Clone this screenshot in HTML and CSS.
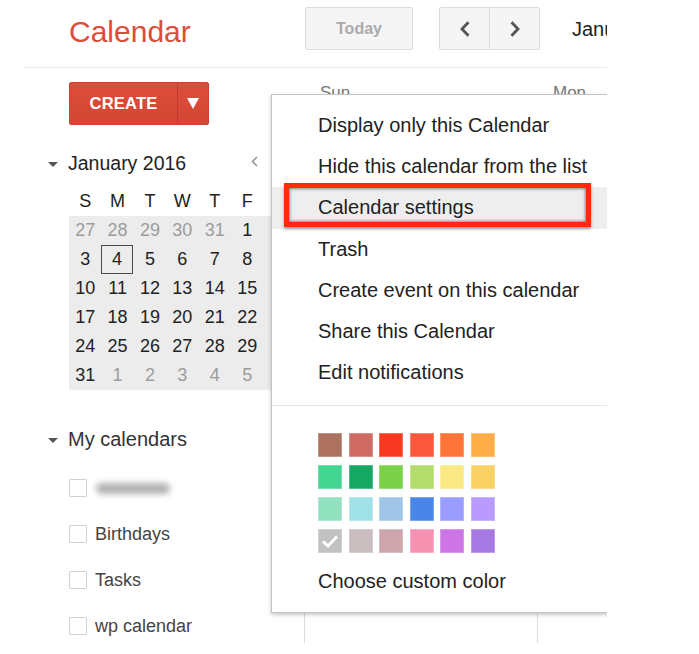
FILE: index.html
```html
<!DOCTYPE html>
<html lang="en">
<head>
<meta charset="utf-8">
<title>Calendar</title>
<link rel="stylesheet" href="styles.css">
</head>
<body>
<div class="app">
  <header class="topbar">
    <div class="logo">Calendar</div>
    <button class="btn-today">Today</button>
    <div class="nav-group">
      <button class="nav-btn nav-prev" aria-label="Previous"><svg width="12" height="16" viewBox="0 0 12 16"><path d="M9.5 1.2 L3 8 L9.5 14.8" fill="none" stroke="#555" stroke-width="2.8"/></svg></button>
      <button class="nav-btn" aria-label="Next"><svg width="12" height="16" viewBox="0 0 12 16"><path d="M2.5 1.2 L9 8 L2.5 14.8" fill="none" stroke="#555" stroke-width="2.8"/></svg></button>
    </div>
    <div class="period">January 2016</div>
  </header>

  <div class="workspace">
    <aside class="sidebar">
      <div class="create-group">
        <button class="create-main">CREATE</button>
        <button class="create-drop" aria-label="More"><svg width="12" height="11" viewBox="0 0 12 11"><polygon points="0,0 12,0 6,11" fill="#fff"/></svg></button>
      </div>

      <div class="mini-head">
        <span class="caret"></span>
        <span class="mini-title">January 2016</span>
        <svg class="mini-prev" width="7" height="11" viewBox="0 0 7 11"><path d="M6 1 L1.5 5.5 L6 10" fill="none" stroke="#999" stroke-width="1.6"/></svg>
      </div>

      <div class="mini-dow">
        <span>S</span><span>M</span><span>T</span><span>W</span><span>T</span><span>F</span><span>S</span>
      </div>
      <div class="mini-days">
        <span class="other">27</span><span class="other">28</span><span class="other">29</span><span class="other">30</span><span class="other">31</span><span>1</span><span>2</span>
        <span>3</span><span class="today">4</span><span>5</span><span>6</span><span>7</span><span>8</span><span>9</span>
        <span>10</span><span>11</span><span>12</span><span>13</span><span>14</span><span>15</span><span>16</span>
        <span>17</span><span>18</span><span>19</span><span>20</span><span>21</span><span>22</span><span>23</span>
        <span>24</span><span>25</span><span>26</span><span>27</span><span>28</span><span>29</span><span>30</span>
        <span>31</span><span class="other">1</span><span class="other">2</span><span class="other">3</span><span class="other">4</span><span class="other">5</span><span class="other">6</span>
      </div>

      <div class="section-head">
        <span class="caret"></span>
        <span>My calendars</span>
      </div>
      <ul class="cal-list">
        <li><span class="checkbox"></span><span class="blurred"></span></li>
        <li><span class="checkbox"></span>Birthdays</li>
        <li><span class="checkbox"></span>Tasks</li>
        <li><span class="checkbox"></span>wp calendar</li>
      </ul>
    </aside>

    <main class="grid">
      <div class="grid-head">
        <div class="col-head">Sun</div>
        <div class="col-head">Mon</div>
      </div>
      <div class="grid-body">
        <div class="col"></div>
        <div class="col"></div>
      </div>
    </main>
  </div>

  <div class="menu">
    <ul class="menu-list">
      <li class="menu-item">Display only this Calendar</li>
      <li class="menu-item">Hide this calendar from the list</li>
      <li class="menu-item is-hover">Calendar settings</li>
      <li class="menu-item">Trash</li>
      <li class="menu-item">Create event on this calendar</li>
      <li class="menu-item">Share this Calendar</li>
      <li class="menu-item">Edit notifications</li>
    </ul>
    <div class="menu-divider"></div>
    <div class="swatches">
      <span class="swatch c1"></span><span class="swatch c2"></span><span class="swatch c3"></span><span class="swatch c4"></span><span class="swatch c5"></span><span class="swatch c6"></span>
      <span class="swatch c7"></span><span class="swatch c8"></span><span class="swatch c9"></span><span class="swatch c10"></span><span class="swatch c11"></span><span class="swatch c12"></span>
      <span class="swatch c13"></span><span class="swatch c14"></span><span class="swatch c15"></span><span class="swatch c16"></span><span class="swatch c17"></span><span class="swatch c18"></span>
      <span class="swatch c19"><svg width="24" height="24" viewBox="0 0 24 24"><polyline points="5,12.5 10,17 19,7.5" fill="none" stroke="#fff" stroke-width="3"/></svg></span><span class="swatch c20"></span><span class="swatch c21"></span><span class="swatch c22"></span><span class="swatch c23"></span><span class="swatch c24"></span>
    </div>
    <div class="custom">Choose custom color</div>
    <div class="highlight"></div>
  </div>
</div>
</body>
</html>
```

FILE: styles.css
```css
* { box-sizing: border-box; }

html, body {
  margin: 0;
  padding: 0;
  background: #fff;
}

body {
  font-family: "Liberation Sans", Arial, sans-serif;
  color: #222;
}

button {
  font-family: inherit;
  cursor: pointer;
}

.app {
  position: relative;
  width: 607px;
  height: 654px;
  overflow: hidden;
}

/* ---------- top bar ---------- */
.topbar {
  display: flex;
  align-items: flex-start;
  height: 68px;
  margin-left: 24px;
  border-bottom: 1px solid #ebebeb;
}

.logo {
  flex: none;
  width: 236px;
  margin-left: 45px;
  padding-top: 15px;
  font-size: 30px;
  line-height: 34px;
  color: #dd4b39;
}

.btn-today {
  flex: none;
  width: 108px;
  height: 43px;
  margin-top: 7px;
  padding: 0;
  background: #f5f5f5;
  border: 1px solid #dcdcdc;
  border-radius: 2px;
  font-size: 16px;
  font-weight: bold;
  color: #aaa;
}

.nav-group {
  flex: none;
  display: flex;
  width: 101px;
  height: 43px;
  margin-top: 7px;
  margin-left: 26px;
  background: #f5f5f5;
  border: 1px solid #dcdcdc;
  border-radius: 2px;
}

.nav-btn {
  flex: 1;
  display: flex;
  align-items: center;
  justify-content: center;
  padding: 0;
  background: transparent;
  border: 0;
}

.nav-prev {
  flex: none;
  width: 50px;
  border-right: 1px solid #dcdcdc;
}

.period {
  flex: none;
  margin-left: 32px;
  margin-top: 18px;
  font-size: 20px;
  line-height: 23px;
  white-space: nowrap;
  color: #222;
}

/* ---------- workspace ---------- */
.workspace {
  display: flex;
}

.sidebar {
  flex: none;
  width: 290px;
  padding-left: 48px;
}

.create-group {
  display: flex;
  width: 140px;
  height: 43px;
  margin-top: 14px;
  margin-left: 21px;
  border-radius: 2px;
  background: linear-gradient(#dc4c3a, #d44735);
  border: 1px solid #cf4331;
}

.create-main {
  flex: none;
  width: 108px;
  padding: 0;
  background: transparent;
  border: 0;
  border-right: 1px solid #c23a29;
  color: #fff;
  font-size: 16.5px;
  font-weight: bold;
  letter-spacing: 0.2px;
}

.create-drop {
  flex: 1;
  display: flex;
  align-items: center;
  justify-content: center;
  padding: 0 0 1px 0;
  background: transparent;
  border: 0;
}

.mini-head {
  display: flex;
  align-items: center;
  width: 210px;
  height: 23px;
  margin-top: 26.5px;
}

.caret {
  flex: none;
  width: 0;
  height: 0;
  margin-right: 10px;
  margin-top: 2px;
  border-left: 5.5px solid transparent;
  border-right: 5.5px solid transparent;
  border-top: 5px solid #555;
}

.mini-title {
  font-size: 19.5px;
  line-height: 23px;
  color: #222;
}

.mini-prev {
  margin-left: auto;
  margin-top: -3px;
}

.mini-dow,
.mini-days {
  display: grid;
  grid-template-columns: repeat(6, 32.4px) 38px;
  margin-left: 21px;
  text-align: center;
  font-size: 18px;
}

.mini-dow {
  margin-top: 12.5px;
  grid-auto-rows: 29px;
  line-height: 29px;
  color: #222;
}

.mini-days {
  grid-auto-rows: 29px;
  line-height: 29px;
  background: #ececec;
  color: #222;
}

.mini-days .other {
  color: #9c9c9c;
}

.mini-days .today {
  box-shadow: inset 0 0 0 1px #4a4a4a;
  margin-right: 1px;
}

.section-head {
  display: flex;
  align-items: center;
  margin-top: 37.5px;
  font-size: 20px;
  line-height: 23px;
  color: #333;
}

.cal-list {
  list-style: none;
  margin: 14.5px 0 0 21px;
  padding: 0;
}

.cal-list li {
  display: flex;
  align-items: center;
  height: 46px;
  font-size: 18px;
  color: #444;
}

.checkbox {
  flex: none;
  width: 18px;
  height: 18px;
  margin-right: 8px;
  background: #fff;
  border: 1px solid #d2d2d2;
  border-radius: 1px;
}

.blurred {
  display: block;
  width: 74px;
  height: 11px;
  margin-left: 1px;
  border-radius: 6px;
  background: #b0b0b0;
  filter: blur(3px);
}

/* ---------- main grid ---------- */
.grid {
  flex: 1;
}

.grid-head {
  display: flex;
  height: 27px;
  padding-left: 14px;
  border-bottom: 1px solid #ccc;
}

.col-head {
  flex: none;
  width: 233px;
  padding-left: 16px;
  padding-top: 15px;
  font-size: 17px;
  line-height: 20px;
  color: #777;
  overflow: hidden;
}

.grid-body {
  display: flex;
  height: 548px;
  padding-left: 14px;
}

.col {
  flex: none;
  width: 233px;
  border-left: 1px solid #ddd;
}

/* ---------- context menu ---------- */
.menu {
  position: absolute;
  left: 271px;
  top: 94px;
  width: 420px;
  background: #fff;
  border: 1px solid #c4c4c4;
  box-shadow: 0 2px 4px rgba(0, 0, 0, 0.22);
}

.menu-list {
  list-style: none;
  margin: 0;
  padding: 10px 0 12px;
}

.menu-item {
  height: 41.2px;
  line-height: 41.2px;
  padding-left: 46px;
  font-size: 20px;
  color: #222;
  white-space: nowrap;
}

.menu-item.is-hover {
  background: #eee;
}

.menu-divider {
  border-top: 1px solid #e5e5e5;
}

.swatches {
  display: grid;
  grid-template-columns: repeat(6, 24px);
  grid-auto-rows: 24px;
  column-gap: 6.5px;
  row-gap: 8px;
  margin: 26.5px 0 0 46px;
}

.swatch {
  display: block;
  width: 24px;
  height: 24px;
  box-shadow: inset 0 0 0 1px rgba(255, 255, 255, 0.25);
}

.swatch svg { display: block; }

.c1 { background: #ac725e; }
.c2 { background: #d06b64; }
.c3 { background: #f83a22; }
.c4 { background: #fa573c; }
.c5 { background: #ff7537; }
.c6 { background: #ffad46; }
.c7 { background: #42d692; }
.c8 { background: #16a765; }
.c9 { background: #7bd148; }
.c10 { background: #b3dc6c; }
.c11 { background: #fbe983; }
.c12 { background: #fad165; }
.c13 { background: #92e1c0; }
.c14 { background: #9fe1e7; }
.c15 { background: #9fc6e7; }
.c16 { background: #4986e7; }
.c17 { background: #9a9cff; }
.c18 { background: #b99aff; }
.c19 { background: #c2c2c2; }
.c20 { background: #cabdbf; }
.c21 { background: #cca6ac; }
.c22 { background: #f691b2; }
.c23 { background: #cd74e6; }
.c24 { background: #a47ae2; }

.custom {
  margin: 17.5px 0 0 46px;
  padding-bottom: 18.5px;
  font-size: 20px;
  line-height: 23px;
  color: #222;
}

.highlight {
  position: absolute;
  left: 12px;
  top: 88px;
  width: 307px;
  height: 44px;
  border: 5px solid #ff2a06;
  box-shadow: inset 0 0 3px 1px rgba(0, 0, 0, 0.45), 0 2px 3px rgba(0, 0, 0, 0.35);
}
```
